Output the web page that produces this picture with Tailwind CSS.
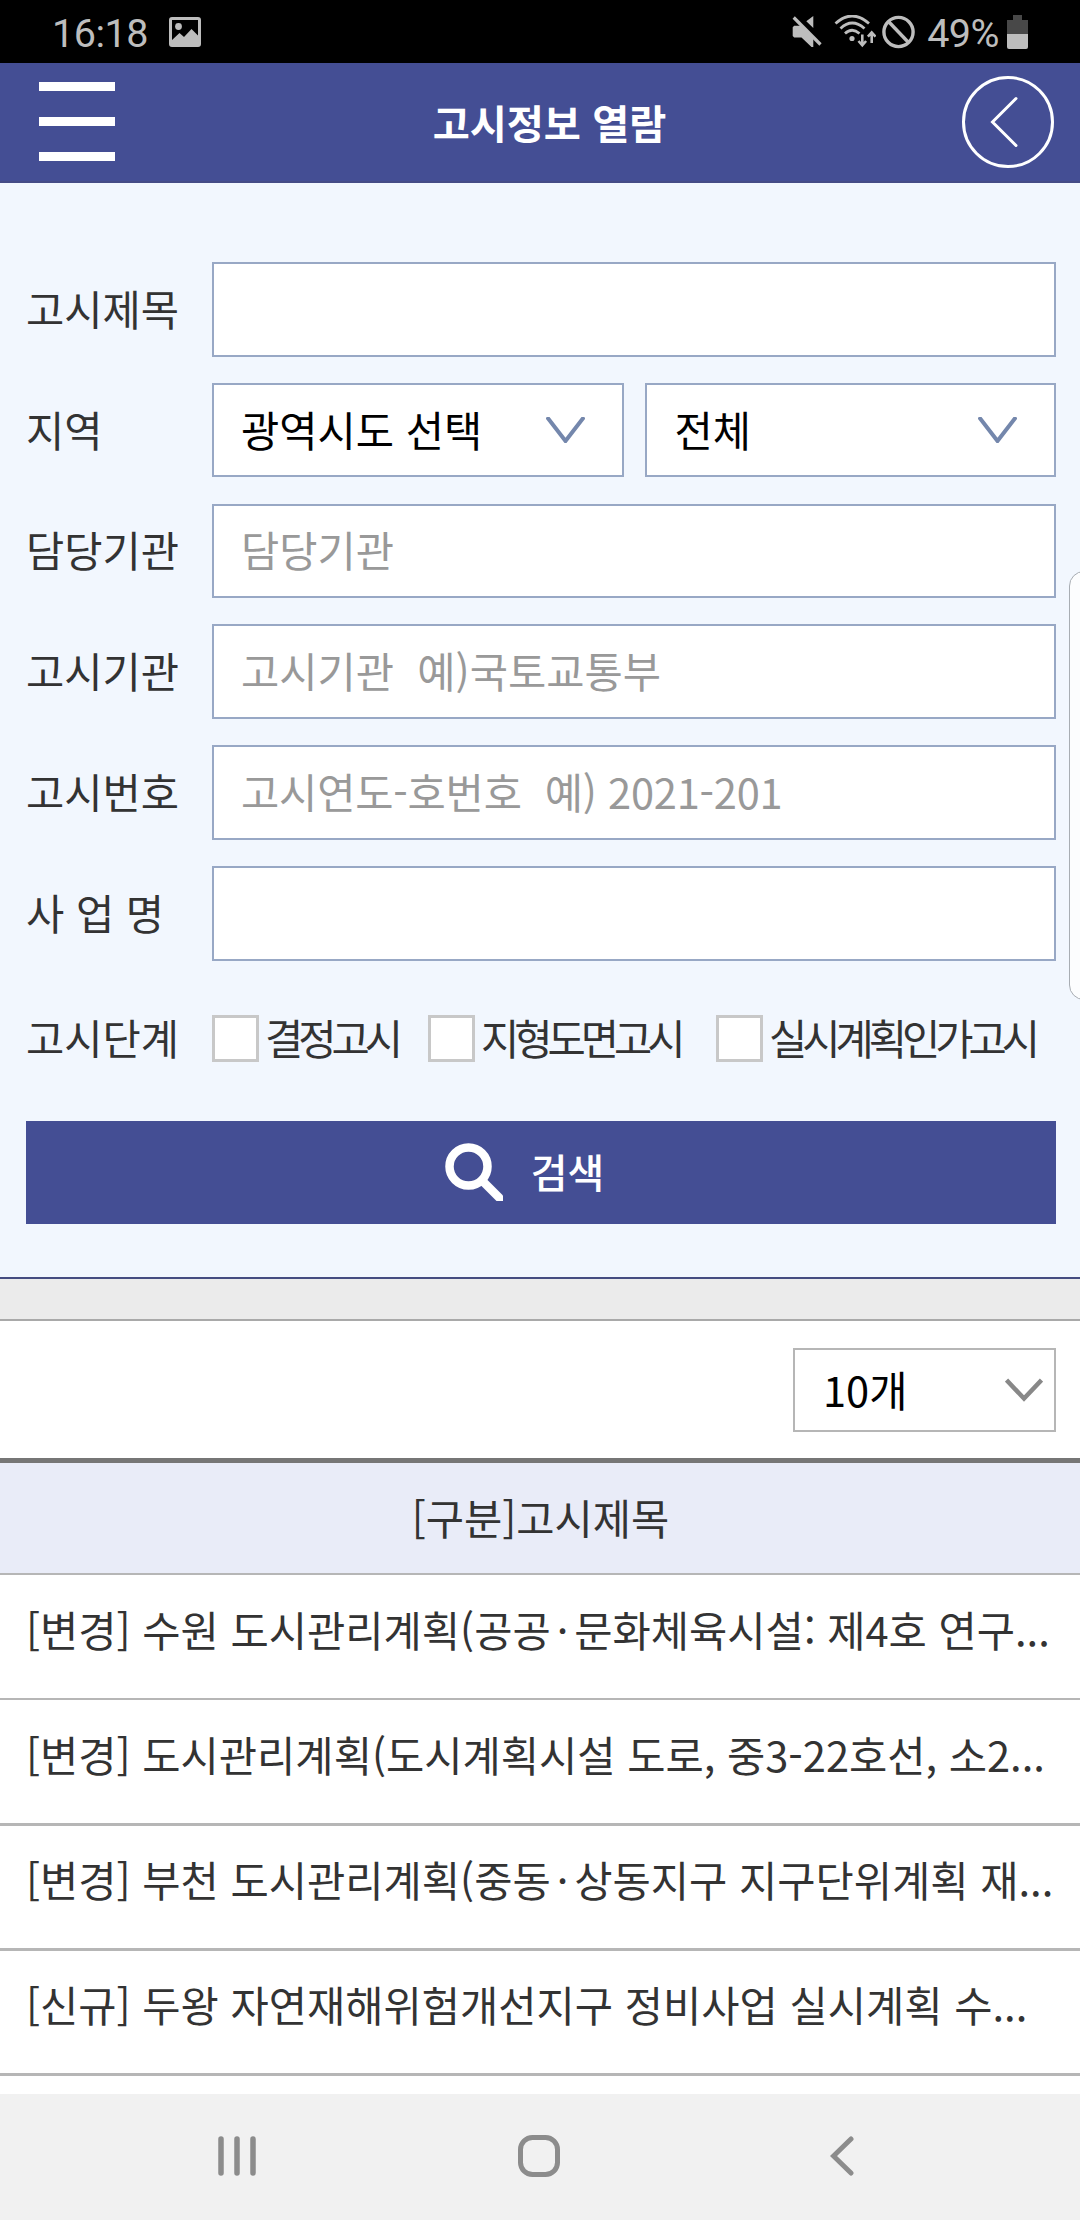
<!DOCTYPE html>
<html lang="ko">
<head>
    <meta charset="UTF-8">
    <meta name="viewport" content="width=device-width, initial-scale=1.0">
    <title>고시정보 열람</title>
    <script src="https://cdn.jsdelivr.net/npm/@tailwindcss/browser@4"></script>
</head>
<body class="relative w-[1080px] h-[2220px] overflow-hidden flex flex-col bg-white text-[#333] text-[41.6px] leading-[60px] font-['Noto_Sans_CJK_KR',sans-serif]">
    <!-- 상태바 -->
    <div class="h-[63px] shrink-0 bg-black text-[#bdbdbd] flex items-center justify-between pl-[52px] pr-[52px] font-[Roboto,sans-serif] text-[39.5px] leading-none">
        <div class="flex items-center">
            <span class="pt-[4px] w-[117px] whitespace-nowrap tracking-[-0.5px]">16:18</span>
            <svg class="w-[32px] h-[30px]" viewBox="0 0 32 30" fill="currentColor">
                <path fill-rule="evenodd" d="M3 0h26a3 3 0 0 1 3 3v24a3 3 0 0 1-3 3H3a3 3 0 0 1-3-3V3a3 3 0 0 1 3-3zM3 3v20l7.500-7 4.500 4 7.500-8 6.500 6.500V3z"/>
                <circle cx="9.500" cy="9.500" r="3.400"/>
            </svg>
        </div>
        <div class="flex items-center">
            <svg class="w-[30px] h-[34px] mr-[12px]" viewBox="0 0 30 34" fill="currentColor">
                <path d="M21.300 1v12L14.300 6.300zM.700 12.200L2.200 10.700H8.500L21.300 22v10h-1.800L9.500 22.500H2.200L.700 21z"/>
                <path d="M1.700 2.500l26.800 27" stroke="currentColor" stroke-width="3.200"/>
            </svg>
            <svg class="w-[42px] h-[34px] mr-[6px]" viewBox="0 0 42 34" fill="none" stroke="currentColor" stroke-width="2.800">
                <path d="M1.500 8.500Q18-6.500 35 8.500M6.500 13.500Q18 2.500 30.500 13.500M11 18.500Q18 12 25.500 18.500"/>
                <circle cx="18" cy="23.500" r="2.600" fill="currentColor" stroke="none"/>
                <path d="M28.300 19.500v10.500M24.500 26l3.800 4.300 3.800-4.300M37.700 28V18M33.900 21.700l3.800-4.300 3.800 4.300" stroke-width="2.600"/>
            </svg>
            <svg class="w-[33px] h-[34px] mr-[12px]" viewBox="0 0 33 34" fill="none" stroke="currentColor" stroke-width="3.400">
                <circle cx="16.500" cy="17" r="14.600"/>
                <path d="M6.500 6.500l20 21"/>
            </svg>
            <span class="pt-[4px] mr-[8px] tracking-[-0.5px]">49%</span>
            <svg class="w-[21px] h-[34px]" viewBox="0 0 21 34">
                <path d="M6 0h9v5h6v15H0V5h6z" fill="#484848"/>
                <path d="M0 19h21v13a2 2 0 0 1-2 2H2a2 2 0 0 1-2-2z" fill="#bdbdbd"/>
            </svg>
        </div>
    </div>

    <!-- 헤더 -->
    <header class="h-[120px] shrink-0 bg-[#444e94] border-b-[2px] border-[#454c86] flex items-center justify-between pl-[39px] pr-[26px]">
        <button class="w-[92px] flex flex-col gap-[26px] pb-[1px]">
            <span class="block w-[76px] h-[9px] bg-white"></span>
            <span class="block w-[76px] h-[9px] bg-white"></span>
            <span class="block w-[76px] h-[9px] bg-white"></span>
        </button>
        <h1 class="text-white text-[40.3px] font-bold pl-[6px] pb-[1px]">고시정보 열람</h1>
        <button>
            <svg class="w-[92px] h-[92px]" viewBox="0 0 92 92" fill="none" stroke="#fff" stroke-width="3">
                <circle cx="46" cy="46" r="44.500"/>
                <path d="M54 22.500L30.500 46 54 69.500" stroke-linecap="round"/>
            </svg>
        </button>
    </header>

    <!-- 검색 조건 -->
    <form class="h-[1096px] shrink-0 bg-[#f2f7fe] border-b-2 border-[#454c80] pt-[79px] pl-[26px] pr-[24px]">
        <div class="flex flex-col gap-[26.2px]">
            <div class="flex items-center h-[94.6px]">
                <label class="w-[186px] pb-[3px]">고시제목</label>
                <input type="text" class="flex-1 h-full bg-white border-2 border-[#98a8c5] px-[27px]">
            </div>
            <div class="flex items-center h-[94.6px]">
                <label class="w-[186px] pb-[3px]">지역</label>
                <div class="flex-1 h-full grid grid-cols-2 gap-[21px] text-black">
                    <div class="flex items-center justify-between bg-white border-2 border-[#98a8c5] pl-[27px] pr-[37px]">
                        <span class="pb-[3px]">광역시도 선택</span>
                        <svg class="w-[39px] h-[26px]" viewBox="0 0 39 26" fill="none" stroke="#7487ac" stroke-width="4"><path d="M1 0l18.500 24L38 0"/></svg>
                    </div>
                    <div class="flex items-center justify-between bg-white border-2 border-[#98a8c5] pl-[28px] pr-[37px]">
                        <span class="pb-[3px]">전체</span>
                        <svg class="w-[39px] h-[26px]" viewBox="0 0 39 26" fill="none" stroke="#7487ac" stroke-width="4"><path d="M1 0l18.500 24L38 0"/></svg>
                    </div>
                </div>
            </div>
            <div class="flex items-center h-[94.6px]">
                <label class="w-[186px] pb-[3px]">담당기관</label>
                <input type="text" placeholder="담당기관" class="flex-1 h-full bg-white border-2 border-[#98a8c5] px-[27px] pb-[3px] placeholder:text-[#999]">
            </div>
            <div class="flex items-center h-[94.6px]">
                <label class="w-[186px] pb-[3px]">고시기관</label>
                <input type="text" placeholder="고시기관  예)국토교통부" class="flex-1 h-full bg-white border-2 border-[#98a8c5] px-[27px] pb-[3px] placeholder:text-[#999]">
            </div>
            <div class="flex items-center h-[94.6px]">
                <label class="w-[186px] pb-[3px]">고시번호</label>
                <input type="text" placeholder="고시연도-호번호  예) 2021-201" class="flex-1 h-full bg-white border-2 border-[#98a8c5] px-[27px] pb-[3px] tracking-[-0.2px] placeholder:text-[#999]">
            </div>
            <div class="flex items-center h-[94.6px]">
                <label class="w-[186px] pb-[3px]">사 업 명</label>
                <input type="text" class="flex-1 h-full bg-white border-2 border-[#98a8c5] px-[27px]">
            </div>
        </div>

        <div class="mt-[54px] h-[47px] flex items-center whitespace-nowrap">
            <span class="w-[186px] pb-[2px]">고시단계</span>
            <label class="w-[216px] flex items-center gap-[6px] tracking-[-5px]">
                <input type="checkbox" class="appearance-none size-[47px] shrink-0 bg-white border-3 border-[#c8c8c8]">
                <span class="pb-[2px]">결정고시</span>
            </label>
            <label class="w-[288px] flex items-center gap-[6px] tracking-[-5px]">
                <input type="checkbox" class="appearance-none size-[47px] shrink-0 bg-white border-3 border-[#c8c8c8]">
                <span class="pb-[2px]">지형도면고시</span>
            </label>
            <label class="flex items-center gap-[6px] tracking-[-5px]">
                <input type="checkbox" class="appearance-none size-[47px] shrink-0 bg-white border-3 border-[#c8c8c8]">
                <span class="pb-[2px]">실시계획인가고시</span>
            </label>
        </div>

        <button type="button" class="mt-[59px] w-full h-[103px] bg-[#444e94] text-white text-[40px] font-medium flex items-center justify-center gap-[28px] pr-[33px]">
            <svg class="w-[58px] h-[58px]" viewBox="0 0 58 58" fill="none" stroke="#fff">
                <circle cx="23.500" cy="23.500" r="19" stroke-width="8.500"/>
                <path d="M37.500 38L55 55.500" stroke-width="8.500" stroke-linecap="round"/>
            </svg>
            <span class="pb-[2px]">검색</span>
        </button>
    </form>

    <div class="h-[42px] shrink-0 bg-[#ebebeb] border-b-2 border-[#a9a9a9]"></div>

    <!-- 목록 -->
    <div class="h-[137px] shrink-0 flex items-start justify-end pt-[27px] pr-[24px]">
        <div class="w-[263px] h-[84px] flex items-center justify-between border-2 border-[#b6b6b6] pl-[28px] pr-[11px] text-black">
            <span class="pb-[3px]">10개</span>
            <svg class="w-[38px] h-[24px]" viewBox="0 0 38 24" fill="none" stroke="#888" stroke-width="4.500"><path d="M1.500 2L19 20.500 36.500 2"/></svg>
        </div>
    </div>
    <div class="h-[117px] shrink-0 flex items-center justify-center bg-[#e9ecf8] border-t-[5px] border-t-[#767676] border-b-2 border-b-[#b6b6b6] pl-[1px] pb-[3px]">[구분]고시제목</div>
    <ul class="h-[519px] shrink-0 whitespace-nowrap">
        <li class="h-[125px] border-b-2 border-[#b6b6b6] px-[26px] pt-[24px]">[변경] 수원 도시관리계획(공공<span class="px-[6px]">·</span>문화체육시설: 제4호 연구...</li>
        <li class="h-[126px] border-b-3 border-[#b6b6b6] px-[26px] pt-[24px]">[변경] 도시관리계획(도시계획시설 도로, 중3-22호선, 소2...</li>
        <li class="h-[125px] border-b-3 border-[#b6b6b6] px-[26px] pt-[23px]">[변경] 부천 도시관리계획(중동<span class="px-[6px]">·</span>상동지구 지구단위계획 재...</li>
        <li class="h-[125px] border-b-3 border-[#b6b6b6] px-[26px] pt-[23px]">[신규] 두왕 자연재해위험개선지구 정비사업 실시계획 수...</li>
    </ul>

    <!-- 내비게이션 바 -->
    <nav class="h-[126px] shrink-0 bg-[#f1f1f1] flex items-center justify-between pl-[218px] pr-[226px] pb-[2px]">
        <svg class="w-[38px] h-[40px]" viewBox="0 0 38 40" stroke="#8c8c8c" stroke-width="5.500" stroke-linecap="round"><path d="M3 3v34M19 3v34M35 3v34"/></svg>
        <svg class="w-[42px] h-[42px] mr-[8px]" viewBox="0 0 42 42" fill="none" stroke="#8c8c8c" stroke-width="5"><rect x="2.500" y="2.500" width="37" height="37" rx="12"/></svg>
        <svg class="w-[24px] h-[40px]" viewBox="0 0 24 40" fill="none" stroke="#8c8c8c" stroke-width="5" stroke-linecap="round"><path d="M21 3L3.500 20 21 37"/></svg>
    </nav>

    <!-- 엣지 패널 핸들 -->
    <div class="absolute left-[1069px] top-[571px] w-[30px] h-[429px] rounded-[18px] border-[1.500px] border-[#a8adb3] bg-[#fcfdfe]"></div>
</body>
</html>
